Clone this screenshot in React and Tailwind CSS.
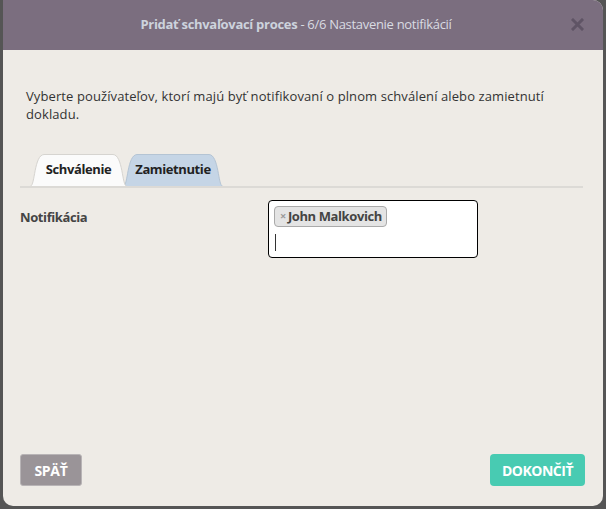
import { useState } from "react";

function Tab({ label, active, width, onClick, className = "" }) {
  const fill = active ? "#fbfbfb" : "#c5d5e6";
  const stroke = active ? "#d6d4d0" : "#b4c4d4";
  const w = width;
  const d = `M0.5,32 C5,32 4,1 14,0.5 L${w - 14},0.5 C${w - 4},1 ${w - 5},32 ${w - 0.5},32`;
  return (
    <button
      onClick={onClick}
      className={`relative h-[32px] shrink-0 text-[13px] font-bold tracking-[-0.4px] text-[#222222] ${className}`}
      style={{ width: w }}
    >
      <svg className="absolute inset-0" width={w} height="32" viewBox={`0 0 ${w} 32`}>
        <path d={d + " Z"} fill={fill} />
        <path d={d} fill="none" stroke={stroke} strokeWidth="1" />
      </svg>
      <span className="relative">{label}</span>
    </button>
  );
}

export default function App() {
  const [tab, setTab] = useState("approve");

  return (
    <div
      className="w-[606px] h-[509px] bg-[#555555] pl-[3px] pr-[3px] pb-[3px] overflow-hidden"
      style={{ fontFamily: '"Open Sans", "Noto Sans", sans-serif' }}
    >
      <div className="h-full flex flex-col bg-[#eeebe6] rounded-tr-[10px] rounded-b-[10px] overflow-hidden">
        {/* Header */}
        <div className="h-[50px] shrink-0 bg-[#7b6e7f] flex items-center relative">
          <div className="flex-1 text-center text-[13px] tracking-[-0.3px] text-[#d9dbe2] pr-[14px]">
            <span className="font-bold text-[#cdd3dd]">Pridať schvaľovací proces</span>
            <span> - 6/6 Nastavenie notifikácií</span>
          </div>
          <button className="absolute right-[19px] top-[18px]">
            <svg width="13" height="13" viewBox="0 0 13 13">
              <path d="M2 2 L11 11 M11 2 L2 11" stroke="#5f5465" strokeWidth="3" strokeLinecap="square" />
            </svg>
          </button>
        </div>

        {/* Body */}
        <div className="flex-1 flex flex-col px-[17px]">
          <p className="mt-[37px] pl-[6px] text-[13px] tracking-[0.1px] leading-[18px] text-[#333333]">
            Vyberte používateľov, ktorí majú byť notifikovaní o plnom schválení alebo
            zamietnutí dokladu.
          </p>

          {/* Tabs */}
          <div className="mt-[31px] flex items-end pl-[10px] border-b-2 border-[#dcdad6] mr-[3px]">
            <Tab
              label="Schválenie"
              width={97}
              active={tab === "approve"}
              onClick={() => setTab("approve")}
              className={tab === "approve" ? "z-10" : ""}
            />
            <Tab
              label="Zamietnutie"
              width={100}
              active={tab === "reject"}
              onClick={() => setTab("reject")}
              className={`-ml-[4px] ${tab === "reject" ? "z-10" : ""}`}
            />
          </div>

          {/* Field */}
          <div className="mt-[12px] flex items-start">
            <label className="w-[248px] pt-[8px] text-[13px] font-bold tracking-[-0.4px] text-[#444444]">
              Notifikácia
            </label>
            <div className="w-[210px] h-[58px] bg-white border border-black rounded-[4px] px-[5px] pt-[5px] flex flex-col items-start">
              <span className="flex items-center h-[21px] pl-[5px] pr-[4px] bg-[#e4e4e4] border border-[#aaaaaa] rounded-[4px] text-[13px] font-bold tracking-[-0.4px] text-[#444444]">
                <span className="text-[#999999] text-[11px] mr-[2px]">×</span>
                John Malkovich
              </span>
              <div className="mt-[7px] ml-[1px] w-px h-[17px] bg-[#333333]" />
            </div>
          </div>

          {/* Footer */}
          <div className="mt-auto mb-[20px] flex justify-between items-center">
            <button className="h-[32px] w-[62px] bg-[#9a9498] border border-[#b8b4b6] rounded-[3px] text-white text-[14px] font-bold tracking-[-0.3px]">
              SPÄŤ
            </button>
            <button className="h-[32px] w-[95px] mr-[1px] bg-[#48cbb2] rounded-[4px] text-white text-[14px] font-bold tracking-[-0.5px]">
              DOKONČIŤ
            </button>
          </div>
        </div>
      </div>
    </div>
  );
}
